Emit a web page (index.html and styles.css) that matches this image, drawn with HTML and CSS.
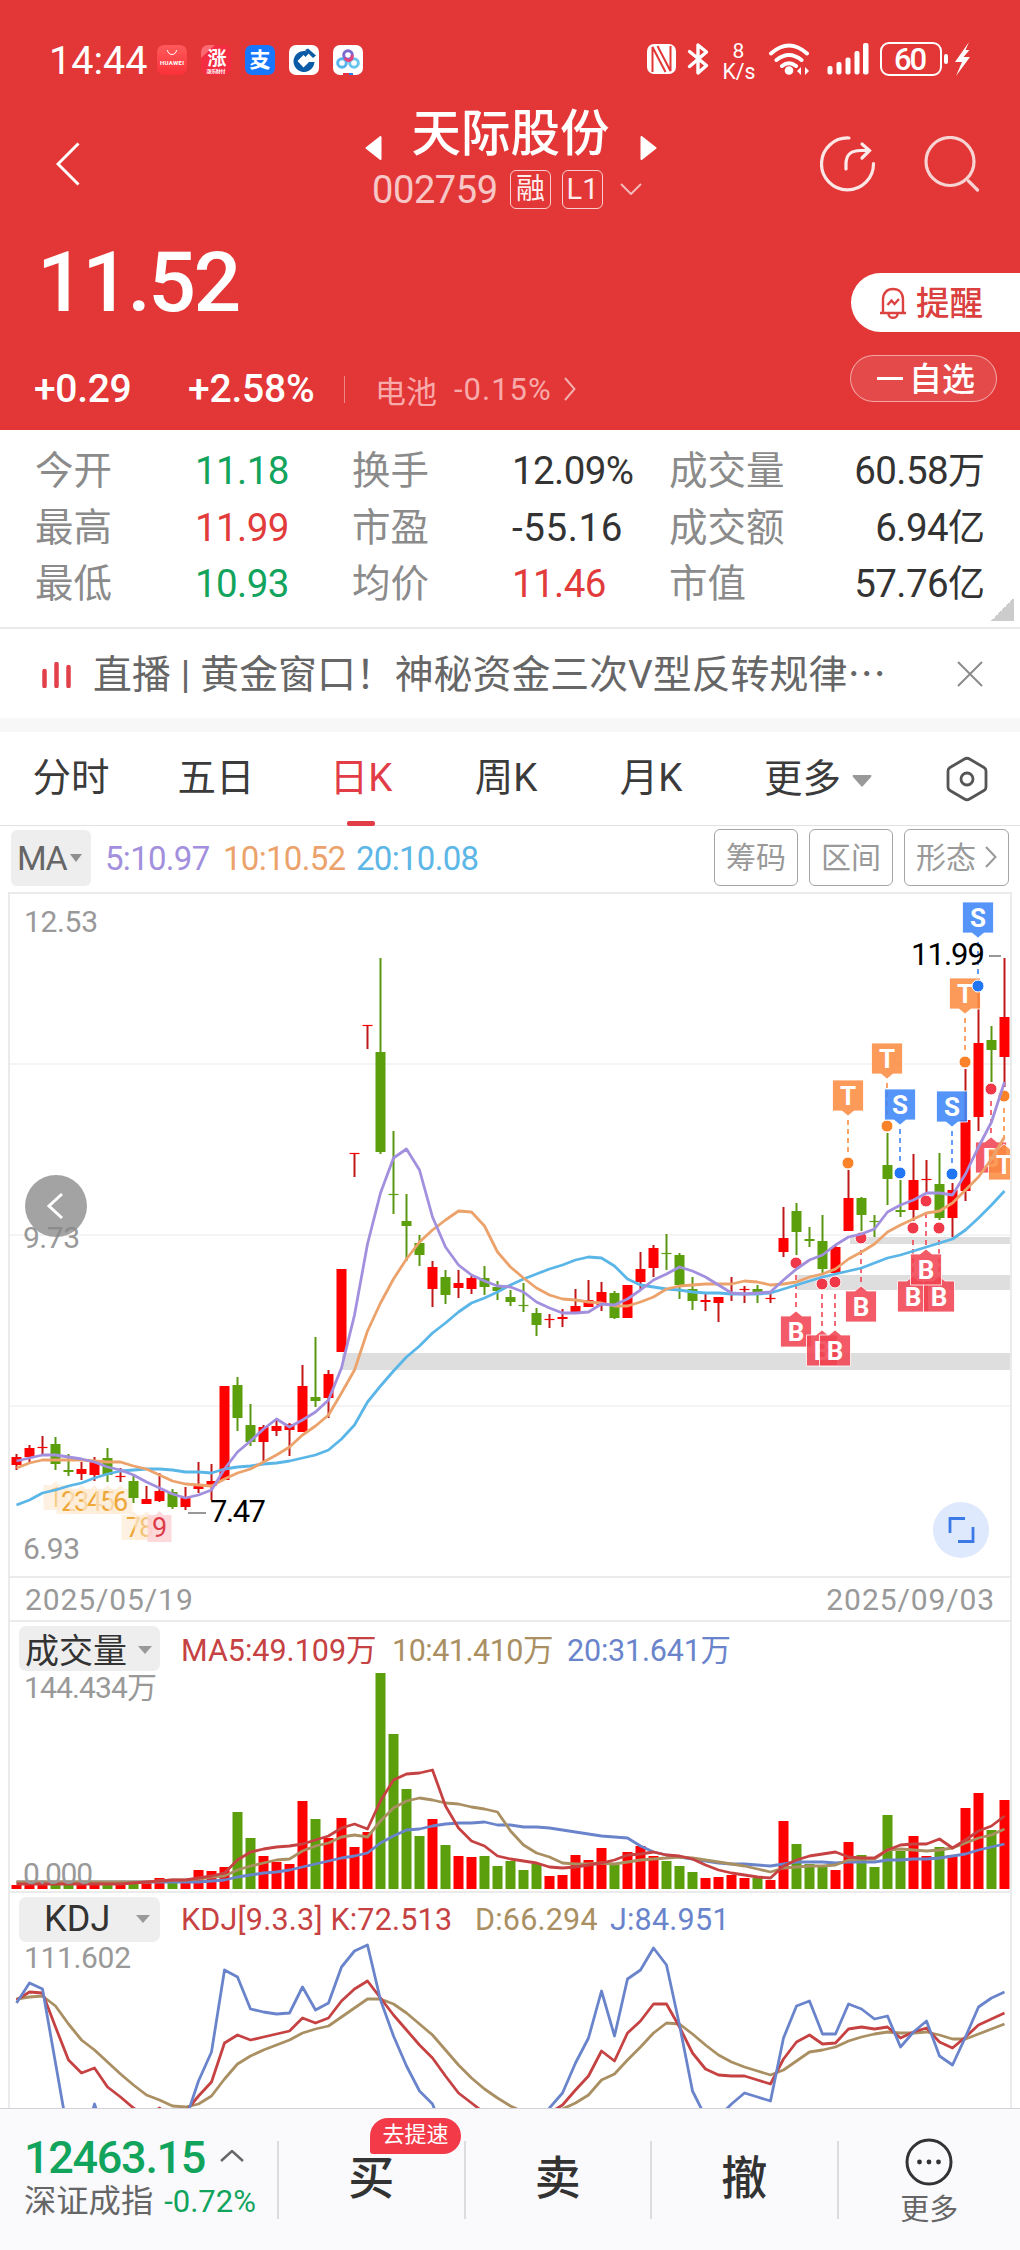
FILE: index.html
```html
<!DOCTYPE html>
<html lang="zh-CN">
<head>
<meta charset="utf-8">
<title>天际股份 002759</title>
<link rel="stylesheet" href="styles.css">
</head>
<body>
<header class="hero">
  <div class="status">
    <span class="clock">14:44</span>
    <div class="apps">
      <svg viewBox="0 0 30 30"><defs><linearGradient id="hw" x1="0" y1="0" x2="0" y2="1"><stop offset="0" stop-color="#ff5a5c"/><stop offset="1" stop-color="#fb3038"/></linearGradient></defs><rect width="30" height="30" rx="7" fill="url(#hw)"/><path d="M10.500 5a4.500 4.500 0 0 0 9 0" fill="none" stroke="#fff" stroke-width="1"/><text x="15" y="19.500" text-anchor="middle" font-size="6" font-weight="700" fill="#fff" textLength="24">HUAWEI</text></svg>
      <svg viewBox="0 0 30 30"><rect width="30" height="30" rx="7" fill="#f42c41"/><path d="M0 13V7a7 7 0 0 1 7-7h7z" fill="#fb6a70"/><text x="16" y="20" text-anchor="middle" font-size="19" font-weight="700" fill="#fff">涨</text><text x="15" y="28" text-anchor="middle" font-size="5" font-weight="700" fill="#fff" textLength="19">涨乐财付</text></svg>
      <svg viewBox="0 0 30 30"><rect width="30" height="30" rx="7" fill="#1777ff"/><text x="15" y="22" text-anchor="middle" font-size="21" font-weight="700" fill="#fff">支</text><path d="M6 20c3-4 8-2 18 3" fill="none" stroke="#fff" stroke-width="2"/></svg>
      <svg viewBox="0 0 30 30"><rect width="30" height="30" rx="7" fill="#fff"/><path d="M20.500 7.500A10.500 10.500 0 1 0 25.500 17H20l-5.500 5.500L8.500 16l6-6 2 2z" fill="#0b5ba6"/><path d="M14.500 10.500l5.500 5.500-5.500 5.500L9 16z" fill="#fff"/><path d="M16 5l3-1.500 8 7-3 2.500z" fill="#0b5ba6"/></svg>
      <svg viewBox="0 0 30 30"><rect width="30" height="30" rx="7" fill="#fff"/><g fill="none" stroke-width="3"><circle cx="9" cy="18" r="4.300" stroke="#58b5ec"/><circle cx="21" cy="18" r="4.300" stroke="#69c4ee"/><circle cx="15" cy="10" r="4.300" stroke="#7b6bd0"/><path d="M12 13c3 5 8 2 7-3" stroke="#e9457a"/></g><path d="M10 28h6v2h-6z" fill="#e8303f"/><path d="M16 28h4v2h-4z" fill="#2a7de8"/></svg>
    </div>
    <svg class="signals" viewBox="640 36 340 46" fill="#fff">
      <rect x="647" y="44" width="29" height="30" rx="7"/>
      <path d="M652.500 72V47l13 25M670.500 46v25l-13-25" fill="none" stroke="#e33636" stroke-width="2"/>
      <path d="M689.500 51.500l17 14-8.500 7.500V45l8.500 7-17 14.500" fill="none" stroke="#fff" stroke-width="3.400" stroke-linejoin="round" stroke-linecap="round"/>
      <text x="738.500" y="58" font-size="21" text-anchor="middle">8</text>
      <text x="739" y="78.500" font-size="22" text-anchor="middle" textLength="33" lengthAdjust="spacingAndGlyphs">K/s</text>
      <g fill="none" stroke="#fff" stroke-width="4" stroke-linecap="round"><path d="M771 53.500q18-16 36 0M776.500 60q12.500-10 25 0M782 66q7-5.500 14 0"/></g>
      <circle cx="789" cy="70.500" r="4.300"/><path d="M797 71l4-4v8zM809 71l-4-4v8z"/>
      <rect x="827.500" y="66" width="5" height="8.500" rx="2"/><rect x="836.500" y="62" width="5" height="12.500" rx="2"/><rect x="845.500" y="57.500" width="5" height="17" rx="2"/><rect x="854.500" y="51" width="5" height="23.500" rx="2"/><rect x="863" y="43" width="5.500" height="31.500" rx="2"/>
      <rect x="881" y="43" width="60" height="32" rx="8" fill="none" stroke="#fff" stroke-width="2"/>
      <text x="910.500" y="70" font-size="31" font-weight="500" text-anchor="middle" textLength="33">60</text>
      <rect x="944" y="54" width="4" height="10" rx="2"/>
      <path d="M969 42l-14 20h7l-6 14 14-19h-6.500l6-7h-4z"/>
    </svg>
  </div>

  <nav class="titlebar">
    <svg class="back" viewBox="0 0 24 44"><path d="M22.500 1.500L2 22l20.500 20.500" fill="none" stroke="#fff" stroke-width="3"/></svg>
    <div class="stock">
      <div class="stock-name">
        <svg viewBox="0 0 17 24"><path d="M15.500 1v22L1.500 12z" fill="#fff" stroke="#fff" stroke-linejoin="round" stroke-width="2"/></svg>
        <h1>天际股份</h1>
        <svg viewBox="0 0 17 24"><path d="M1.500 1v22l14-11z" fill="#fff" stroke="#fff" stroke-linejoin="round" stroke-width="2"/></svg>
      </div>
      <div class="stock-code">
        <span class="code">002759</span><span class="tag">融</span><span class="tag">L1</span>
        <svg viewBox="0 0 22 12"><path d="M1 1l10 10L21 1" fill="none" stroke="#fff" stroke-opacity=".65" stroke-width="2"/></svg>
      </div>
    </div>
    <div class="actions">
      <svg viewBox="0 0 56 56" fill="none" stroke="#fff" stroke-linecap="round" stroke-width="3.200"><path d="M29 2A26 26 0 1 0 53.500 27.500" opacity=".88"/><path d="M26 33v-5c0-10 5-13.500 15-13.500h7M42 8l7.500 6.500L42 22" opacity=".9"/></svg>
      <svg viewBox="0 0 56 56" fill="none" stroke="#fff" stroke-width="3.200" opacity=".78"><circle cx="26" cy="25.500" r="24"/><path d="M44.500 45l9 9" stroke-linecap="round"/></svg>
    </div>
  </nav>

  <section class="quote">
    <div class="quote-main">
      <div class="price">11.52</div>
      <div class="changes">
        <span class="chg">+0.29</span><span class="pct">+2.58%</span>
        <span class="sector"><span>电池</span><span class="sector-pct">-0.15%</span>
        <svg viewBox="0 0 12 24"><path d="M1 1l9.500 11L1 23" fill="none" stroke="#fff" stroke-width="2"/></svg></span>
      </div>
    </div>
    <div class="quote-side">
      <button class="remind"><svg viewBox="0 0 28 32" fill="none" stroke="#dc4340" stroke-width="2.400"><path d="M4 25V12.500C4 6 8 2 14 2s10 4 10 10.500V25M1 26h26M9.500 27c0 5 9 5 9 0M8.500 18l4-4.500 3 3.500 4.500-5"/></svg><span>提醒</span></button>
      <button class="watch"><i></i><span>自选</span></button>
    </div>
  </section>
</header>

<section class="stats">
  <span class="k">今开</span><b class="down">11.18</b><span class="k">换手</span><b>12.09%</b><span class="k">成交量</span><b class="r">60.58<em>万</em></b>
  <span class="k">最高</span><b class="up">11.99</b><span class="k">市盈</span><b class="pe">-55.16</b><span class="k">成交额</span><b class="r">6.94<em>亿</em></b>
  <span class="k">最低</span><b class="down">10.93</b><span class="k">均价</span><b class="up">11.46</b><span class="k">市值</span><b class="r">57.76<em>亿</em></b>
</section>

<section class="news">
  <svg class="news-bars" viewBox="0 0 29 26"><path d="M2.500 9v15M14.500 2v22M26.500 5v19" stroke="#e2404a" stroke-width="4.500" stroke-linecap="round"/></svg>
  <p>直播<span class="bar">|</span>黄金窗口！神秘资金三次V型反转规律<span class="dots">⋯</span></p>
  <svg class="close" viewBox="0 0 26 26"><path d="M1 1l24 24M25 1L1 25" stroke="#8b8b8b" stroke-width="2"/></svg>
</section>

<nav class="tabs">
  <span>分时</span><span>五日</span><span class="active">日K</span><span>周K</span><span>月K</span>
  <span class="more">更多<svg viewBox="0 0 20 12"><path d="M1 0h18q1 1 0 2L11 11q-1 1-2 0L1 2q-1-1 0-2z" fill="#999"/></svg></span>
  <svg class="hex" viewBox="0 0 42 46" fill="none" stroke="#555" stroke-width="2.800"><path d="M18.500 3Q21 1.500 23.500 3L38 11.500q2 1.200 2 3.500v16q0 2.300-2 3.500L23.500 43q-2.500 1.500-5 0L4 34.500Q2 33.300 2 31V15q0-2.300 2-3.500z"/><circle cx="21" cy="23" r="6"/></svg>
</nav>

<section class="ma-row">
  <span class="chip-ma">MA<svg viewBox="0 0 20 12"><path d="M1 0h18L10 12z" fill="#8f8f8f"/></svg></span>
  <span class="ma5">5:10.97</span><span class="ma10">10:10.52</span><span class="ma20">20:10.08</span>
  <div class="tools"><button>筹码</button><button>区间</button><button>形态<svg viewBox="0 0 12 22"><path d="M1 1l9.500 10L1 21" fill="none" stroke="#999" stroke-width="2"/></svg></button></div>
</section>

<main class="chart">
  <svg id="price" viewBox="10 4 1000 682"></svg>
  <div class="dates"><span>2025/05/19</span><span>2025/09/03</span></div>
  <div class="legend">
    <span class="chip">成交量<svg viewBox="0 0 14 8"><path d="M0 0h14L7 8z" fill="#999"/></svg></span>
    <span class="red">MA5:49.109万</span><span class="brown v2">10:41.410万</span><span class="blue v3">20:31.641万</span>
  </div>
  <svg id="volume" viewBox="10 0 1000 218"></svg>
  <div class="legend kdj">
    <span class="chip">KDJ<svg viewBox="0 0 14 8"><path d="M0 0h14L7 8z" fill="#999"/></svg></span>
    <span class="red">KDJ[9.3.3] K:72.513</span><span class="brown k2">D:66.294</span><span class="blue k3">J:84.951</span>
  </div>
  <svg id="kdj" viewBox="10 55 1000 163"></svg>
</main>

<footer class="bottom">
  <div class="index">
    <div class="index-top">12463.15<svg viewBox="0 0 24 12"><path d="M1 11L12 1l11 10" fill="none" stroke="#666" stroke-width="2.400"/></svg></div>
    <div class="index-sub">深证成指<span>-0.72%</span></div>
  </div>
  <div class="act">买<span class="badge">去提速</span></div>
  <div class="act">卖</div>
  <div class="act">撤</div>
  <div class="more-btn"><svg viewBox="0 0 48 48"><circle cx="24" cy="24" r="22" fill="none" stroke="#333" stroke-width="3"/><g fill="#333"><circle cx="14.500" cy="24" r="2.400"/><circle cx="24" cy="24" r="2.400"/><circle cx="33.500" cy="24" r="2.400"/></g></svg>更多</div>
</footer>
<script src="chart.js"></script>
</body>
</html>
```
FILE: styles.css
```css
* { box-sizing: border-box; }
body { margin: 0; width: 1020px; height: 2250px; overflow: hidden; display: flex; flex-direction: column; background: #fff; color: #333; font-family: Roboto, "Noto Sans CJK SC", sans-serif; }
button { font: inherit; border: 0; padding: 0; background: none; }
svg { display: block; flex: none; }
h1, p { margin: 0; font-weight: 400; }

.hero { height: 430px; flex: none; background: #e33636; color: #fff; }
.status { display: flex; align-items: center; height: 48px; margin-top: 36px; padding-left: 49px; }
.status .clock { width: 108px; font-size: 39.500px; line-height: 50px; padding-top: 2px; }
.apps { display: flex; gap: 14px; }
.apps svg { width: 30px; height: 30px; }
.signals { width: 340px; height: 46px; margin: -2px 40px 0 auto; }

.titlebar { display: flex; height: 132px; padding: 16px 40px 0 56px; }
.back { width: 24px; height: 44px; margin-top: 42px; }
.stock { margin-left: 285px; width: 292px; }
.stock-name { display: flex; align-items: center; justify-content: space-between; height: 64px; }
.stock-name svg { width: 17px; height: 24px; margin-top: 32px; }
.stock-name h1 { font-size: 49.500px; line-height: 64px; font-weight: 500; margin: 3px 0 0 -1px; }
.stock-code { display: flex; align-items: center; height: 42px; margin-top: 4px; padding-left: 7px; }
.code { width: 138px; font-size: 38px; letter-spacing: -.4px; opacity: .72; line-height: 44px; padding-top: 2px; }
.tag { width: 41px; height: 39px; margin-right: 11px; border: 1.500px solid rgba(255,255,255,.75); border-radius: 6px; font-size: 29px; line-height: 36px; text-align: center; color: #ffecec; }
.stock-code svg { width: 22px; height: 12px; margin-left: 6px; }
.actions { display: flex; gap: 48px; margin: 36px 0 0 163px; }
.actions svg { width: 56px; height: 56px; }

.quote { display: flex; justify-content: space-between; height: 214px; }
.quote-main { padding-left: 34px; }
.price { margin: 17px 0 0 3px; font-size: 84px; line-height: 100px; font-weight: 500; letter-spacing: -2.500px; }
.changes { display: flex; align-items: center; height: 48px; margin-top: 32px; }
.chg, .pct { font-size: 39px; font-weight: 500; }
.chg { width: 154px; letter-spacing: -.3px; }
.pct { letter-spacing: -.2px; width: 156px; }
.sector { display: flex; align-items: center; height: 27px; padding-left: 30px; border-left: 1px solid rgba(255,255,255,.4); font-size: 31px; color: #f8aaaa; }
.sector-pct { margin-left: 17px; letter-spacing: 1px; }
.sector svg { width: 12px; height: 24px; margin-left: 12px; opacity: .6; }
.quote-side { width: 170px; padding-top: 57px; }
.remind, .watch { display: flex; align-items: center; }
.remind span { margin-top: -5px; }
.watch span { margin-top: -4px; }
.remind { width: 169px; height: 59px; margin-left: 1px; padding-left: 28px; border-radius: 30px 0 0 30px; background: #fff; color: #d9403e; font-size: 33.500px; font-weight: 500; }
.remind svg { width: 28px; height: 32px; margin-right: 9px; }
.watch { width: 147px; height: 47px; margin-top: 23px; padding-left: 26px; border: 1px solid rgba(255,255,255,.5); border-radius: 24px; background: rgba(255,255,255,.1); color: #fff; font-size: 33px; font-weight: 500; }
.watch i { width: 26px; height: 3px; margin-right: 6px; background: #fff; }

.stats { position: relative; flex: none; display: grid; grid-template-columns: 160px 157px 160px 157px 150px 166px; grid-auto-rows: 56.500px; align-items: center; height: 199px; padding: 13px 35px 0 35px; border-bottom: 2px solid #ebebeb; font-size: 38.500px; }
.stats b { font-weight: 400; letter-spacing: -.6px; line-height: 50px; height: 50px; margin-right: -10px; }
.stats em { font-style: normal; letter-spacing: 0; font-size: 37px; line-height: 0; }
.stats .pe { letter-spacing: .6px; }
.stats .k { color: #8b8b8b; font-size: 38.500px; line-height: 50px; }
.stats .r { text-align: right; margin-right: 0; }
.stats .up { color: #e23b3b; }
.stats .down { color: #12a45d; }
.stats::after { content: ""; position: absolute; right: 6px; bottom: 6px; width: 23px; height: 23px; background: linear-gradient(135deg, transparent 50%, #ccc 50%); }

.news { flex: none; display: flex; align-items: center; height: 89px; padding: 0 37px 0 42px; color: #666; font-size: 38.900px; }
.news-bars { width: 29px; height: 26px; margin: 3px 22px 0 0; }
.news p { flex: 1; white-space: nowrap; line-height: 50px; margin-top: 2px; }
.news .bar { margin: 0 10px; }
.close { width: 26px; height: 26px; }

.tabs { position: relative; flex: none; display: flex; align-items: center; height: 108px; border-top: 14px solid #f7f7f7; border-bottom: 1px solid #e2e2e2; font-size: 38.500px; color: #3b3b3b; }
.tabs > span { position: relative; width: 145px; height: 92px; line-height: 90px; text-align: center; text-indent: -3px; }
.tabs .active { color: #e23c47; }
.tabs .active::after { content: ""; position: absolute; left: 57px; bottom: -1px; width: 28px; height: 5px; border-radius: 2px; background: #e23c47; }
.tabs .more { display: flex; align-items: center; width: 222px; padding-left: 42px; }
.tabs .more svg { width: 20px; height: 12px; margin: 4px 0 0 11px; }
.hex { width: 42px; height: 46px; margin-left: -1px; }

.ma-row { flex: none; display: flex; align-items: center; height: 66px; padding: 0 11px 2px; font-size: 33px; letter-spacing: -.7px; }
.chip-ma { display: flex; align-items: center; width: 80px; height: 56px; padding-left: 6px; border-radius: 6px; background: #eee; color: #666; letter-spacing: -1.500px; font-size: 34px; }
.chip-ma svg { width: 14px; height: 8px; margin-left: 3px; }
.ma5 { width: 118px; margin-left: 14px; color: #a28fdd; }
.ma10 { width: 133px; color: #eca26b; }
.ma20 { color: #5cb6e6; }
.tools { display: flex; gap: 11px; margin-left: auto; margin-top: -2px; }
.tools button { display: flex; align-items: center; justify-content: center; width: 84px; height: 57px; padding-bottom: 4px; border: 1.500px solid #a5a5a5; border-radius: 6px; color: #999; font-size: 30px; letter-spacing: 0; }
.tools button:last-child { width: 105px; }
.tools button svg { width: 12px; height: 22px; margin: 3px 0 0 9px; }

.chart { flex: none; width: 1004px; height: 1216px; margin-left: 8px; border: solid #ebebeb; border-width: 2px 2px 0; overflow: hidden; }
.chart svg text { font-family: Roboto, "Noto Sans CJK SC", sans-serif; }
#price { width: 1000px; height: 682px; }
#volume { width: 1000px; height: 218px; overflow: visible; }
#kdj { width: 1000px; height: 163px; overflow: visible; }
.dates { display: flex; justify-content: space-between; height: 46px; padding: 0 15px 0 15px; border: solid #ebebeb; border-width: 2px 0; color: #999; font-size: 30px; line-height: 43px; letter-spacing: .9px; }
.legend { display: flex; align-items: center; height: 51px; padding: 1px 0 0 9px; font-size: 30.500px; white-space: nowrap; }
.chip { display: flex; align-items: center; width: 141px; height: 45px; margin-right: 21px; padding-left: 6px; border-radius: 7px; background: #eee; color: #333; font-size: 34px; }
.legend .chip svg { width: 14px; height: 8px; margin: 3px 0 0 11px; }
.red { width: 211px; color: #c64242; }
.brown { color: #a98f62; }
.blue { color: #6a84cc; }
.v2 { width: 175px; letter-spacing: -.5px; }
.v3 { letter-spacing: -.2px; }
.legend.kdj { border-top: 2px solid #ebebeb; height: 54px; padding-top: 2px; padding-bottom: 2px; letter-spacing: .2px; }
.kdj .chip { padding-left: 25px; font-size: 36px; }
.kdj .chip svg { margin: 0 10px 0 auto; }
.kdj .red { width: 294px; }
.k2 { width: 135px; }

.bottom { flex: 1; display: flex; align-items: center; border-top: 1px solid #d2d2d6; background: #fafafd; }
.index { width: 277px; padding-left: 24px; margin-top: -7px; }
.index-top { display: flex; align-items: center; font-size: 45px; line-height: 52px; padding-top: 2px; font-weight: 500; letter-spacing: -1.300px; color: #12a45d; }
.index-top svg { width: 24px; height: 12px; margin: -4px 0 0 15px; }
.index-sub { margin-top: -3px; font-size: 32.300px; line-height: 40px; color: #666; white-space: nowrap; }
.index-sub span { margin-left: 11px; font-size: 31px; color: #12a45d; }
.act { position: relative; width: 186.500px; height: 78px; border-left: 2px solid #dcdce0; text-align: center; font-size: 46px; line-height: 74px; font-weight: 500; color: #333; }
.badge { position: absolute; left: 91px; top: -23px; width: 91px; height: 36px; border-radius: 18px 18px 18px 3px; background: #f23a48; color: #fff; font-size: 22px; line-height: 34px; font-weight: 400; }
.more-btn { flex: 1; display: flex; flex-direction: column; align-items: center; height: 78px; border-left: 2px solid #dcdce0; font-size: 29px; line-height: 48px; color: #666; white-space: nowrap; }
.more-btn svg { width: 48px; height: 48px; margin-top: -3px; }
```
FILE: chart.js
```js
// Every series has one entry per trading day; values are pane coordinates.
const X = i => 16.5 + 13 * i;
const RED = '#ff0000', GREEN = '#5ba00c';

// colour, high, low, body top, body bottom
const days = `R 564 580 567 575|R 555 572 558 567|R 546 565 557 557|G 547 580 554 574|G 564 586 580 582|R 572 590 579 584|R 567 591 572 585|G 558 592 568 585|R 578 592 586 586|G 585 613 591 608|R 596 614 609 614|R 583 612 601 611|G 599 619 602 617|R 597 620 607 617|R 572 603 596 599|R 574 610 591 596|R 496 590 496 590|G 487 541 495 528|G 514 556 535 552|R 535 571 537 552|R 530 546 536 541|R 533 566 534 540|R 475 542 496 542|G 447 517 507 511|R 480 528 484 508|R 379 462 379 462|R 263 287 263 263|R 135 159 135 135|G 68 264 162 262|G 241 324 304 304|G 304 371 331 336|G 345 376 353 365|R 371 417 377 399|G 380 414 387 405|R 380 408 393 398|R 386 404 388 399|G 376 405 388 397|G 391 410 397 401|G 400 416 407 412|G 393 422 415 415|G 418 446 423 435|R 424 438 429 429|R 419 437 427 429|R 399 424 416 423|R 390 417 410 417|R 392 421 402 415|G 401 429 403 428|R 395 428 395 428|R 362 399 379 392|R 355 387 358 378|G 344 380 363 363|G 363 409 365 395|G 387 420 399 411|R 403 421 410 412|R 407 432 407 413|R 387 411 403 403|R 396 413 399 399|G 395 413 399 402|R 403 413 408 408|R 317 367 348 362|G 313 365 321 342|G 337 357 349 351|G 325 383 351 379|R 356 385 357 383|R 280 341 308 341|G 307 341 308 325|G 325 347 331 331|G 243 315 275 289|G 290 327 320 322|R 264 331 290 320|R 270 302 289 289|G 263 330 294 328|R 293 347 300 328|R 179 311 230 301|R 103 241 153 227|G 136 192 150 160|R 68 197 127 167`
  .split('|').map(d => { const [c, ...v] = d.split(' '); return [c === 'R' ? RED : GREEN, ...v.map(Number)]; });

const ma5 = [571,568,565,565,567,569,572,577,580,585,592,598,604,608,605,600,579,562,551,539,529,537,530,522,510,478,425,354,303,268,259,280,327,357,375,385,391,396,397,402,412,418,423,423,422,414,415,409,400,390,384,377,381,387,395,403,404,403,402,390,379,370,365,355,347,344,339,322,315,310,303,303,305,284,257,232,192];
const ma10 = [578,573,570,570,570,570,571,572,572,576,579,585,591,594,595,596,589,583,579,572,565,557,545,536,525,503,480,441,413,389,369,352,340,330,321,322,336,362,377,388,398,405,409,410,412,413,416,416,412,407,399,396,395,394,394,394,391,392,395,394,392,387,384,379,369,362,354,342,335,329,323,321,313,300,287,269,247];
const ma20 = [615,610,603,600,596,593,588,584,581,580,579,579,580,582,582,583,579,577,576,574,573,571,568,565,560,549,535,512,496,481,467,456,443,433,422,413,408,402,395,389,384,379,375,370,367,368,376,389,395,397,399,400,402,403,403,404,404,404,403,399,395,391,387,384,381,378,373,368,365,361,357,353,349,340,328,315,301];

const vol = [4,4,4,5,5,5,5,5,6,6,6,11,10,9,19,18,22,77,51,33,27,25,88,70,51,71,42,57,216,155,100,53,70,44,33,32,33,23,28,19,25,13,14,34,29,41,24,37,43,33,28,23,17,11,12,14,11,11,9,68,45,25,24,19,47,34,22,74,38,53,33,42,34,81,96,59,89];
const v5 = [5,5,5,5,5,5,5,5,5,6,7,8,9,9,11,13,16,29,37,40,42,43,45,49,53,61,65,60,88,109,115,116,119,83,61,48,43,33,30,28,26,22,21,22,24,26,29,34,35,37,34,33,30,24,19,16,14,12,11,23,29,33,35,37,32,31,31,39,44,45,45,50,41,49,58,63,73];
const v10 = [7,7,7,7,7,7,7,7,7,7,7,8,9,9,10,12,13,19,23,26,29,30,38,43,46,52,54,52,68,81,88,91,89,86,85,82,80,77,58,44,36,32,26,25,25,26,25,27,29,30,31,32,31,29,27,25,23,20,17,21,22,23,23,24,29,30,30,39,40,39,38,39,41,46,51,54,60];
const v20 = [7,7,7,7,7,7,7,7,7,7,7,7,7,7,7,8,9,12,14,16,17,19,22,25,28,31,33,36,46,53,59,60,63,65,66,66,67,64,64,62,62,61,59,57,55,53,52,51,43,37,34,32,30,28,26,25,25,24,23,25,27,27,27,26,27,27,27,29,29,30,30,31,33,35,39,42,45];

const k = [110,102,103,137,170,183,178,197,207,218,227,218,230,222,206,192,153,145,150,147,144,141,128,133,128,111,99,91,108,125,140,155,168,186,203,213,223,232,238,238,232,223,215,200,186,161,171,143,131,114,114,137,163,179,185,186,186,190,194,169,152,145,154,153,139,137,139,137,148,142,138,152,158,147,135,129,123];
const d = [109,107,106,116,134,150,160,172,184,195,205,210,216,217,214,206,189,174,166,160,155,150,143,139,136,127,118,109,109,114,123,134,145,160,175,188,199,208,216,222,224,223,219,213,205,190,184,170,157,143,133,134,144,155,165,172,177,181,185,180,171,162,160,157,151,147,144,142,143,143,142,145,149,149,144,139,134];
const j = [113,93,99,173,247,263,214,253,260,260,260,240,260,230,191,162,80,87,119,122,124,123,97,120,113,77,61,55,110,146,176,201,214,247,260,260,260,260,260,250,237,218,203,173,148,101,146,89,80,58,75,135,201,227,227,214,203,207,211,148,116,111,144,144,114,119,129,126,157,142,131,166,175,147,117,108,102];

const line = (s, color, y = v => v, w = 2.8) =>
  `<polyline fill="none" stroke="${color}" stroke-width="${w}" stroke-linejoin="round" points="${s.map((v, i) => X(i) + ',' + y(v)).join(' ')}"/>`;
const label = (x, y, t, w, color = '#999', size = 30) =>
  `<text x="${x}" y="${y}" font-size="${size}" fill="${color}" textLength="${w}">${t}</text>`;

function candles() {
  return days.map(([c, hi, lo, top, bot], i) => {
    const x = X(i), wick = c === RED ? '#c01818' : '#5b9612';
    const body = top === bot
      ? `<path d="M${x - 5} ${top + .5}h10" stroke="${c}" stroke-width="1.2"/>`
      : `<rect x="${x - 5}" y="${top}" width="10" height="${bot - top}" fill="${c}"/>`;
    return `<path d="M${x} ${hi}V${lo}" stroke="${wick}" stroke-width="2"/>${body}`;
  }).join('');
}

// letter, x, tag top, dot y, +1 = pointer below the tag, -1 = pointer above it
function marker([t, x, top, dot, dir]) {
  const fill = { T: '#fa8c42', S: '#3d85f7', B: '#f04452' }[t];
  const dotFill = { T: '#fa8228', S: '#2275f4', B: '#f03848' }[t];
  const l = x - 15.5, r = x + 15.5, b = top + 31;
  const shape = dir > 0
    ? `M${l} ${top}H${r}V${b}H${x + 6}L${x} ${b + 5}L${x - 6} ${b}H${l}z`
    : `M${l} ${b}H${r}V${top}H${x + 6}L${x} ${top - 5}L${x - 6} ${top}H${l}z`;
  const from = dir > 0 ? b + 9 : top - 9, to = dir > 0 ? dot - 9 : dot + 9;
  return `<path d="M${x} ${from}V${to}" stroke="${fill}" stroke-width="1.6" stroke-dasharray="5 4"/>
    <path d="${shape}" fill="${fill}" fill-opacity=".88" stroke="#fff" stroke-opacity=".8" stroke-width="1"/>
    <text x="${x}" y="${top + 25}" font-size="26" font-weight="700" fill="#fff" text-anchor="middle">${t}</text>
    <circle cx="${x}" cy="${dot}" r="6" fill="${dotFill}" stroke="#fff" stroke-width="1"/>`;
}
const markers = [['B',796,426,373,-1],['B',822,445,394,-1],['B',835,445,392,-1],['B',861,401,348,-1],['B',913,391,338,-1],['B',939,391,338,-1],['B',926,364,311,-1],['B',991,252,199,-1],['T',848,190,273,1],['T',887,153,236,1],['T',965,88,172,1],['S',900,199,283,1],['S',952,201,284,1],['S',978,12,96,1],['T',1004,259,206,-1]];

function sequence() {
  return [1,2,3,4,5,6,7,8,9].map(n => {
    const x = X(n + 2), top = n === 1 ? 595 : n < 7 ? 599 : 625, last = n === 9;
    return `<path d="M${x - 12} ${top}h8l4-4 4 4h8v${last ? 27 : 25}h-24z" fill="${last ? '#fcd3d6' : '#fdebd6'}" fill-opacity="${last ? .85 : .7}"/>
      <text x="${x}" y="${top + 22}" font-size="27" text-anchor="middle" fill="${last ? '#dd3c49' : '#eda638'}" fill-opacity="${n === 1 || n === 8 ? .6 : 1}">${n}</text>`;
  }).join('');
}

const grid = [174, 345, 516].map(y => `<path d="M10 ${y}H1010" stroke="#f1f1f1" stroke-width="1.500"/>`).join('');
const gaps = [[342, 463, 17], [797, 385, 15], [850, 347, 7]].map(([x, y, h]) => `<rect x="${x}" y="${y}" width="${1012 - x}" height="${h}" fill="#dedede"/>`).join('');

document.getElementById('price').innerHTML = grid + gaps +
  `<circle cx="56" cy="316" r="31" fill="#a3a3a3"/><path d="M62 304l-13 12 13 12" fill="none" stroke="#fff" stroke-width="3"/>` +
  label(24, 42, '12.53', 74) + `<g opacity=".85">${label(23, 358, '9.73', 57, '#888')}</g>` + label(23, 669, '6.93', 57) +
  sequence() + candles() + markers.map(marker).join('') +
  line(ma20, '#5bb6e8') + line(ma10, '#eca26b') + line(ma5, '#a28fdd') +
  label(911, 75, '11.99', 74, '#000', 31) + '<path d="M989 66h12M188 623h18" stroke="#777" stroke-width="1.5"/>' +
  label(210, 632, '7.47', 56, '#000', 31) +
  '<circle cx="961" cy="640" r="28" fill="#dee9fd"/><path d="M950 643V628.500H965M973 637V651.500H958" fill="none" stroke="#3a79e6" stroke-width="2.800"/>';

const vy = v => 216 - v;
document.getElementById('volume').innerHTML =
  label(24, 25, '144.434万', 133) + 
  vol.map((v, i) => `<rect x="${X(i) - 5}" y="${vy(v)}" width="10" height="${v}" fill="${days[i][0]}"/>`).join('') +
  line(v20, '#6a84cc', vy) + line(v10, '#a98f62', vy) + line(v5, '#c64242', vy) + label(23, 211, '0.000', 70);

document.getElementById('kdj').innerHTML =
  label(24, 78, '111.602', 107) + line(d, '#a98f62') + line(k, '#c64242') + line(j, '#6a84cc');
```
